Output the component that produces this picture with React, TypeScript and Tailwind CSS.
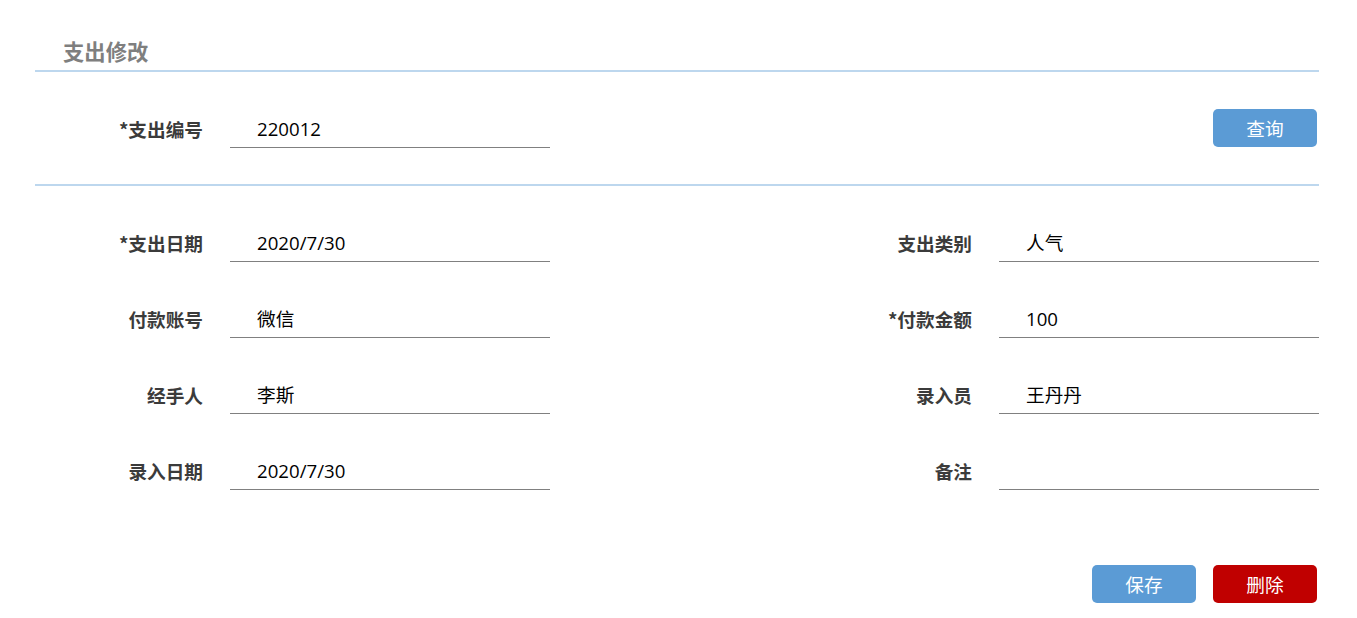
import React from "react"

interface Field {
  label: string
  value: string
}

const ROWS: [Field, Field][] = [
  [
    { label: "*支出日期", value: "2020/7/30" },
    { label: "支出类别", value: "人气" },
  ],
  [
    { label: "付款账号", value: "微信" },
    { label: "*付款金额", value: "100" },
  ],
  [
    { label: "经手人", value: "李斯" },
    { label: "录入员", value: "王丹丹" },
  ],
  [
    { label: "录入日期", value: "2020/7/30" },
    { label: "备注", value: "" },
  ],
]

function FormField({ label, value }: Field) {
  return (
    <div className="flex items-center w-[515px] h-[39px]">
      <div className="w-[168px] text-right font-bold text-[18.67px] text-[#3b3b3b]">{label}</div>
      <div
        className="ml-[27px] w-[320px] h-[39px] border-b border-[#808080] pl-[27px] pt-[2px] flex items-center text-[18.67px] text-black"
        style={{ fontFamily: '"Open Sans", "Noto Sans CJK SC", sans-serif' }}
      >
        {value}
      </div>
    </div>
  )
}

function Button({ text, color, className = "" }: { text: string; color: string; className?: string }) {
  return (
    <button
      className={`w-[104px] h-[38px] rounded-[5px] text-white text-[18.67px] leading-none ${color} ${className}`}
    >
      {text}
    </button>
  )
}

export default function App() {
  return (
    <div
      className="w-full h-[618px] bg-white pl-[35px] pr-[38px] pt-[33px]"
      style={{ fontFamily: '"Noto Sans CJK SC", "Noto Sans", sans-serif' }}
    >
      {/* Header */}
      <div className="h-[37px] pl-[28px] pb-[2px] flex items-center text-[21.33px] font-bold text-[#7f7f7f]">
        支出修改
      </div>
      <div className="h-[2px] bg-[#bdd7ee]" />

      {/* Query row */}
      <div className="mt-[37px] flex items-end justify-between pr-[2px]">
        <FormField label="*支出编号" value="220012" />
        <Button text="查询" color="bg-[#5b9bd5]" className="mb-[1px]" />
      </div>
      <div className="mt-[36px] h-[2px] bg-[#bdd7ee]" />

      {/* Detail fields */}
      <div className="mt-[37px] flex flex-col gap-[37px]">
        {ROWS.map(([left, right]) => (
          <div key={left.label} className="flex justify-between">
            <FormField {...left} />
            <FormField {...right} />
          </div>
        ))}
      </div>

      {/* Actions */}
      <div className="mt-[75px] flex justify-end gap-[17px] pr-[2px]">
        <Button text="保存" color="bg-[#5b9bd5]" />
        <Button text="删除" color="bg-[#c00000]" />
      </div>
    </div>
  )
}
